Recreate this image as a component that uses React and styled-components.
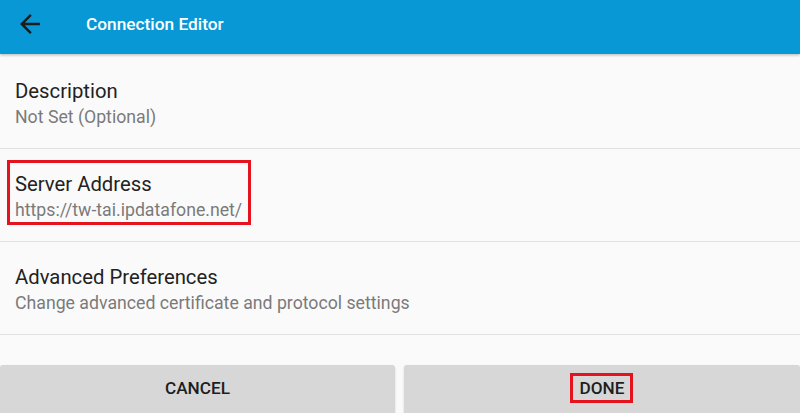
import React from "react";
import styled, { createGlobalStyle } from "styled-components";

const Global = createGlobalStyle`
  html, body { margin: 0; padding: 0; background: #fafafa; overflow: hidden; }
  body { font-family: Roboto, "Noto Sans", sans-serif; }
  * { box-sizing: border-box; }
`;

const Screen = styled.div`
  width: 800px;
  height: 413px;
  display: flex;
  flex-direction: column;
  background: #fafafa;
  overflow: hidden;
`;

const AppBar = styled.header`
  height: 54px;
  flex: none;
  background: #0898d6;
  display: flex;
  align-items: flex-start;
  padding-top: 9px;
  box-shadow: 0 1px 3px rgba(0, 0, 0, 0.28);
  position: relative;
  z-index: 1;
`;

const BackButton = styled.button`
  width: 30px;
  height: 30px;
  margin-left: 15px;
  padding: 0;
  border: none;
  background: none;
  display: flex;
  align-items: center;
  justify-content: center;
  color: #1c1c1c;
`;

const Title = styled.h1`
  margin: 0 0 0 41px;
  font-size: 17.3px;
  line-height: 30px;
  font-weight: 500;
  color: #ffffff;
`;

const List = styled.div`
  padding-top: 2px;
  display: flex;
  flex-direction: column;
`;

const Row = styled.div`
  height: 93px;
  border-bottom: 1px solid #e2e2e2;
  padding: 23px 15px 0;
`;

const TextBlock = styled.div`
  display: inline-block;
  position: relative;
  ${(p) =>
    p.$highlight &&
    `
    &::after {
      content: "";
      position: absolute;
      top: -12px;
      left: -8px;
      right: -9px;
      bottom: -4px;
      border: 3px solid #e5131d;
      pointer-events: none;
    }
  `}
`;

const RowTitle = styled.div`
  font-size: 20.3px;
  line-height: 24px;
  color: #222222;
`;

const RowSubtitle = styled.div`
  margin-top: 3px;
  font-size: 17.7px;
  line-height: 22px;
  color: #7a7a7a;
`;

const ButtonBar = styled.div`
  margin-top: 30px;
  display: grid;
  grid-template-columns: 395px 1fr;
  gap: 9px;
`;

const ActionButton = styled.button`
  height: 50px;
  border: none;
  border-radius: 3px;
  background: #d7d7d7;
  box-shadow: 0 1px 2px rgba(0, 0, 0, 0.18);
  font-family: Roboto, sans-serif;
  font-size: 17.2px;
  font-weight: 500;
  color: #1e1e1e;
  display: flex;
  align-items: flex-start;
  justify-content: center;
  padding: 13px 0 0;
  line-height: 20px;
`;

const ButtonLabel = styled.span`
  position: relative;
  ${(p) =>
    p.$highlight &&
    `
    &::after {
      content: "";
      position: absolute;
      top: -5px;
      bottom: -5px;
      left: -10px;
      right: -9px;
      border: 3px solid #e5131d;
    }
  `}
`;

const items = [
  { title: "Description", subtitle: "Not Set (Optional)" },
  { title: "Server Address", subtitle: "https://tw-tai.ipdatafone.net/", highlight: true },
  { title: "Advanced Preferences", subtitle: "Change advanced certificate and protocol settings" },
];

export default function App() {
  return (
    <>
      <Global />
      <Screen>
        <AppBar>
          <BackButton aria-label="Back">
            <svg width="30" height="30" viewBox="0 0 24 24" fill="currentColor">
              <path d="M20 11H7.83l5.59-5.59L12 4l-8 8 8 8 1.41-1.41L7.83 13H20v-2z" />
            </svg>
          </BackButton>
          <Title>Connection Editor</Title>
        </AppBar>
        <List>
          {items.map((it) => (
            <Row key={it.title}>
              <TextBlock $highlight={it.highlight}>
                <RowTitle>{it.title}</RowTitle>
                <RowSubtitle>{it.subtitle}</RowSubtitle>
              </TextBlock>
            </Row>
          ))}
        </List>
        <ButtonBar>
          <ActionButton>
            <ButtonLabel>CANCEL</ButtonLabel>
          </ActionButton>
          <ActionButton>
            <ButtonLabel $highlight>DONE</ButtonLabel>
          </ActionButton>
        </ButtonBar>
      </Screen>
    </>
  );
}
